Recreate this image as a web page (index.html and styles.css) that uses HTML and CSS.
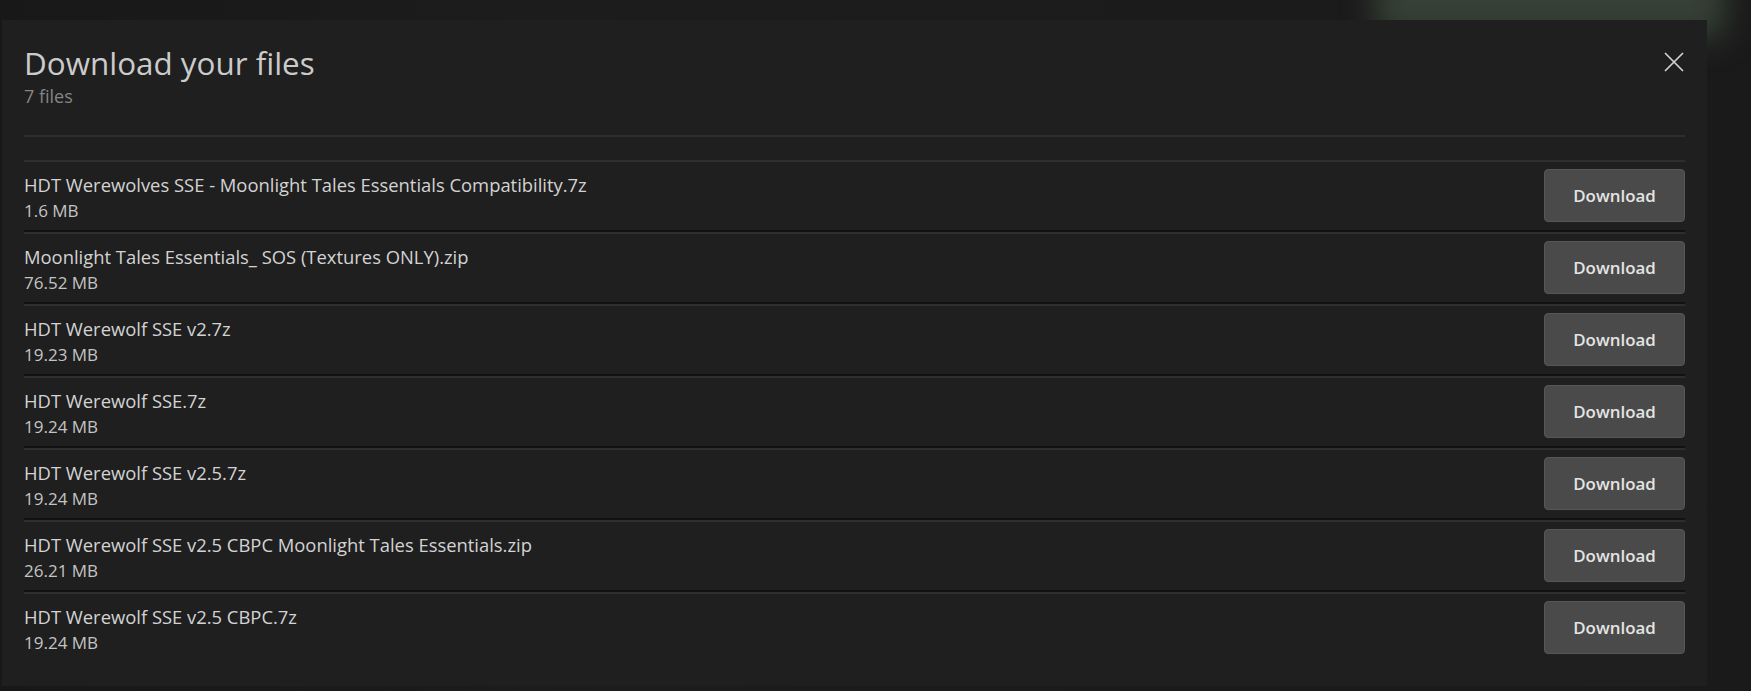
FILE: index.html
```html
<!DOCTYPE html>
<html lang="en">
<head>
<meta charset="utf-8">
<title>Download your files</title>
<link rel="stylesheet" href="styles.css">
</head>
<body>
<div class="backdrop" aria-hidden="true"><div class="glow"></div></div>
<section class="modal">
  <header class="modal-header">
    <div class="heading">
      <h1 class="title">Download your files</h1>
      <p class="subtitle">7 files</p>
    </div>
    <button class="close" aria-label="Close">
      <svg width="20" height="20" viewBox="0 0 20 20"><path d="M1 1 L19 19 M19 1 L1 19" stroke="#d2d2d2" stroke-width="1.7" fill="none"/></svg>
    </button>
  </header>
  <ul class="file-list">
    <li class="file-row"><div class="file-info"><div class="file-name">HDT Werewolves SSE - Moonlight Tales Essentials Compatibility.7z</div><div class="file-size">1.6 MB</div></div><button class="dl-btn">Download</button></li>
    <li class="file-row"><div class="file-info"><div class="file-name">Moonlight Tales Essentials_ SOS (Textures ONLY).zip</div><div class="file-size">76.52 MB</div></div><button class="dl-btn">Download</button></li>
    <li class="file-row"><div class="file-info"><div class="file-name">HDT Werewolf SSE v2.7z</div><div class="file-size">19.23 MB</div></div><button class="dl-btn">Download</button></li>
    <li class="file-row"><div class="file-info"><div class="file-name">HDT Werewolf SSE.7z</div><div class="file-size">19.24 MB</div></div><button class="dl-btn">Download</button></li>
    <li class="file-row"><div class="file-info"><div class="file-name">HDT Werewolf SSE v2.5.7z</div><div class="file-size">19.24 MB</div></div><button class="dl-btn">Download</button></li>
    <li class="file-row"><div class="file-info"><div class="file-name">HDT Werewolf SSE v2.5 CBPC Moonlight Tales Essentials.zip</div><div class="file-size">26.21 MB</div></div><button class="dl-btn">Download</button></li>
    <li class="file-row"><div class="file-info"><div class="file-name">HDT Werewolf SSE v2.5 CBPC.7z</div><div class="file-size">19.24 MB</div></div><button class="dl-btn">Download</button></li>
  </ul>
</section>
</body>
</html>
```

FILE: styles.css
```css
* { box-sizing: border-box; }

html, body {
  margin: 0;
  background: #191919;
  height: 100%;
  overflow: hidden;
}

body {
  position: relative;
  padding: 20px 44px 0 2px;
  font-family: "Open Sans", "Noto Sans", sans-serif;
  color: #d2d2d2;
}

.backdrop {
  position: absolute;
  inset: 0;
  overflow: hidden;
  background: linear-gradient(90deg, #181818 0%, #1c1c1c 30%, #1b1b1b 70%, #1a1a1a 100%);
}

.glow {
  position: absolute;
  left: 1375px;
  top: -40px;
  width: 350px;
  height: 78px;
  border-radius: 12px;
  background: #364036;
  filter: blur(15px);
}

.modal {
  position: relative;
  background: #1f1f1f;
  padding: 23px 22px 24px;
}

.modal-header {
  display: flex;
  justify-content: space-between;
  align-items: flex-start;
  padding-bottom: 27px;
  border-bottom: 2px solid #2d2d2d;
}

.title {
  margin: 0;
  font-size: 31.4px;
  line-height: 40px;
  font-weight: 400;
  color: #cbcbcb;
}

.subtitle {
  margin: 1px 0 0;
  font-size: 18px;
  line-height: 24px;
  color: #858585;
}

.close {
  margin: 9px 1px 0 0;
  padding: 0;
  width: 20px;
  height: 20px;
  border: 0;
  background: transparent;
  display: flex;
}

.file-list {
  list-style: none;
  margin: 23px 0 0;
  padding: 0;
}

.file-row {
  display: flex;
  justify-content: space-between;
  align-items: center;
  padding: 7px 0 8px;
  border-top: 2px solid #2e2e2e;
  border-bottom: 2px solid #111111;
}

.file-row:last-child {
  border-bottom: 0;
}

.file-info {
  padding-top: 4px;
  height: 53px;
}

.file-name {
  font-size: 18.4px;
  line-height: 24px;
  color: #d3d3d3;
}

.file-size {
  margin-top: 3px;
  font-size: 17px;
  line-height: 22px;
  color: #c4c4c4;
}

.dl-btn {
  width: 141px;
  height: 53px;
  border: 1px solid #575757;
  border-radius: 4px;
  background: #4a4a4a;
  color: #e4e4e4;
  font-family: "Open Sans", "Noto Sans", sans-serif;
  font-size: 16.9px;
  font-weight: 600;
  display: flex;
  align-items: center;
  justify-content: center;
  padding: 0;
}
```
